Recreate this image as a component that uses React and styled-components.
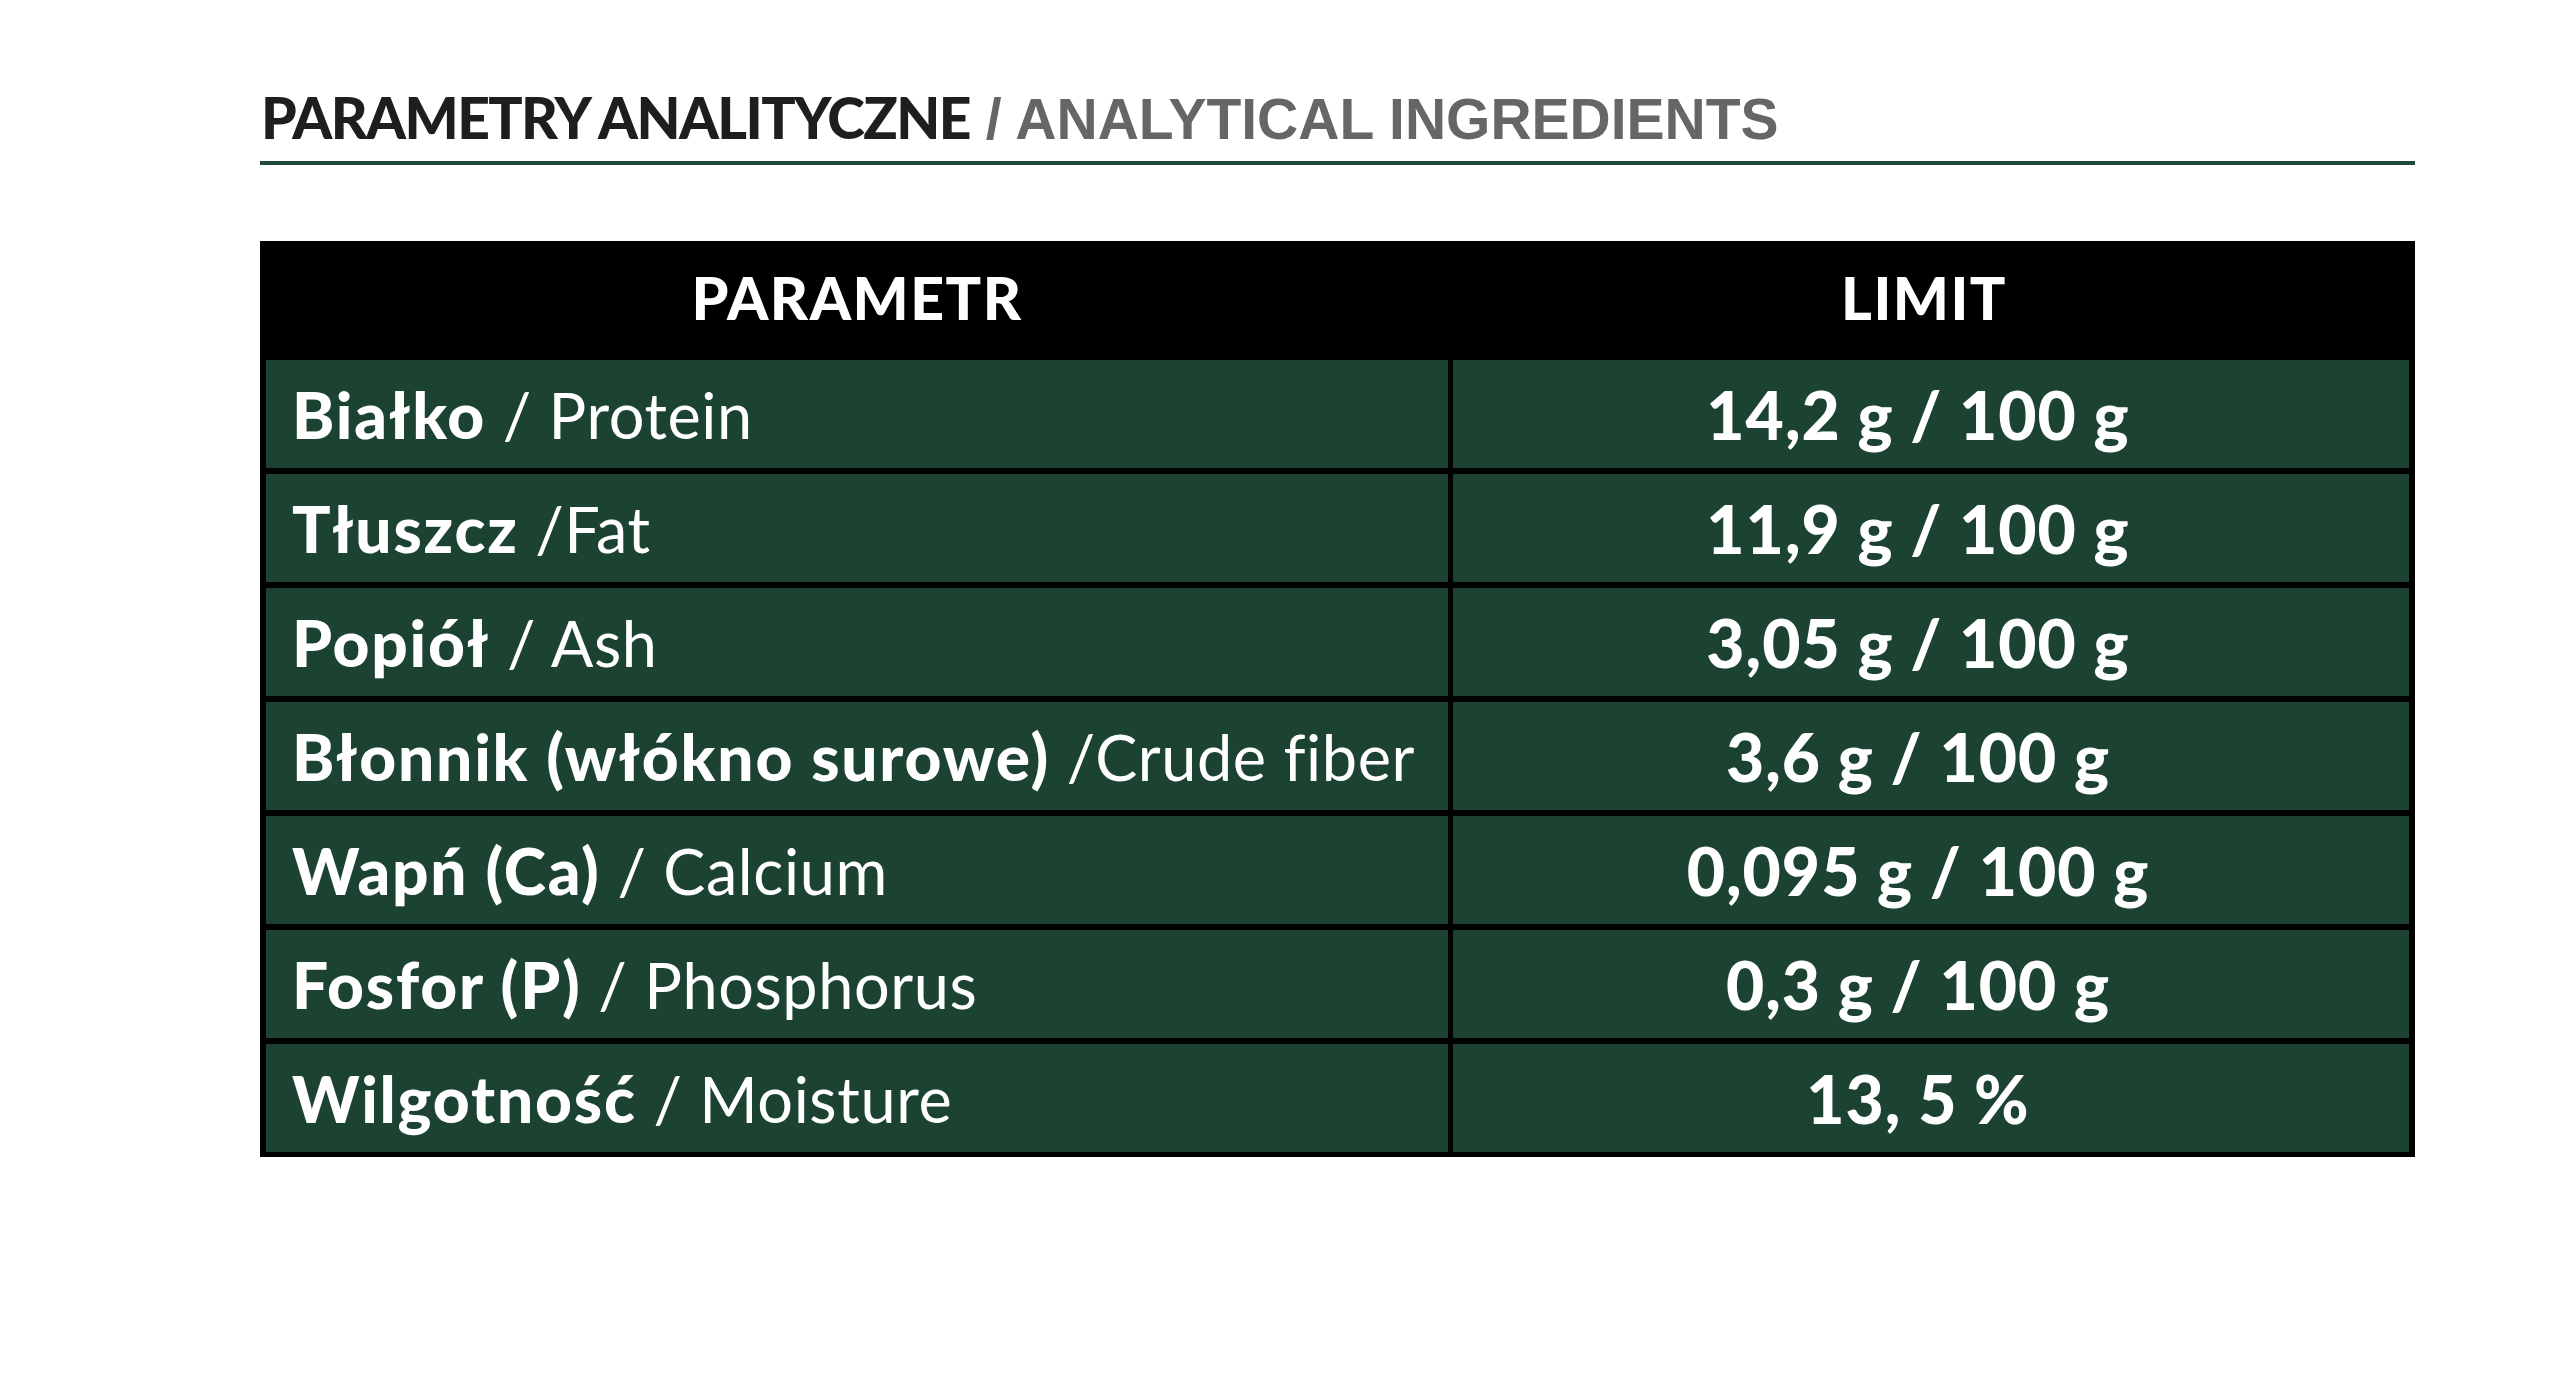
import React from "react";
import styled, { createGlobalStyle } from "styled-components";

const Global = createGlobalStyle`
  html, body { margin: 0; padding: 0; background: #ffffff; }
  body { font-family: "Lato", "Liberation Sans", sans-serif; }
`;

const Page = styled.div`
  padding: 89px 145px 200px 260px;
`;

const Heading = styled.h1`
  margin: 0;
  padding: 0 0 14px 1px;
  border-bottom: 4px solid #1e4a3a;
  line-height: 56px;
  font-size: 56px;
  white-space: nowrap;
`;

const HeadPl = styled.span`
  font-family: "Lato", sans-serif;
  font-weight: 900;
  font-size: 57px;
  color: #1e1e1e;
  letter-spacing: -1.6px;
`;

const HeadEn = styled.span`
  font-family: "Liberation Sans", Arial, sans-serif;
  font-weight: 700;
  color: #666666;
  font-size: 57px;
`;

const Table = styled.div`
  margin-top: 76px;
  display: grid;
  grid-template-columns: 1182px 956px;
  column-gap: 5px;
  row-gap: 6px;
  padding: 0 6px 5px 6px;
  background: #000000;
  width: max-content;
`;

const HeadCell = styled.div`
  height: 113px;
  display: flex;
  align-items: center;
  justify-content: center;
  padding-right: ${(p) => (p.$right ? "14px" : "0")};
  color: #ffffff;
  font-family: "Lato", sans-serif;
  font-weight: 900;
  font-size: 59px;
  letter-spacing: 1.5px;
`;

const Cell = styled.div`
  height: 108px;
  background: #1c4332;
  color: #ffffff;
  display: flex;
  align-items: center;
  justify-content: ${(p) => (p.$center ? "center" : "flex-start")};
  padding: ${(p) => (p.$center ? "0 26px 0 0" : "0 0 0 26px")};
  box-sizing: border-box;
  font-family: "Lato", sans-serif;
  font-size: 63px;
  white-space: pre;
`;

const Bold = styled.span`
  font-weight: 900;
  font-size: 64px;
  letter-spacing: 1.8px;
`;

const Light = styled.span`
  font-weight: 400;
  letter-spacing: 0.6px;
`;

const Value = styled.span`
  font-weight: 900;
  font-size: 66px;
  letter-spacing: 1px;
`;

const rows = [
  ["Białko", " / Protein", "14,2 g / 100 g"],
  ["Tłuszcz", " /Fat", "11,9 g / 100 g"],
  ["Popiół", " / Ash", "3,05 g / 100 g"],
  ["Błonnik (włókno surowe)", " /Crude fiber", "3,6 g / 100 g"],
  ["Wapń (Ca)", " / Calcium", "0,095 g / 100 g"],
  ["Fosfor (P)", " / Phosphorus", "0,3 g / 100 g"],
  ["Wilgotność", " / Moisture", "13, 5 %"],
];

export default function App() {
  return (
    <Page>
      <Global />
      <Heading>
        <HeadPl>PARAMETRY ANALITYCZNE</HeadPl>
        <HeadEn> / ANALYTICAL INGREDIENTS</HeadEn>
      </Heading>
      <Table>
        <HeadCell>PARAMETR</HeadCell>
        <HeadCell $right>LIMIT</HeadCell>
        {rows.map(([pl, en, val]) => (
          <React.Fragment key={pl}>
            <Cell>
              <Bold>{pl}</Bold>
              <Light>{en}</Light>
            </Cell>
            <Cell $center>
              <Value>{val}</Value>
            </Cell>
          </React.Fragment>
        ))}
      </Table>
    </Page>
  );
}
